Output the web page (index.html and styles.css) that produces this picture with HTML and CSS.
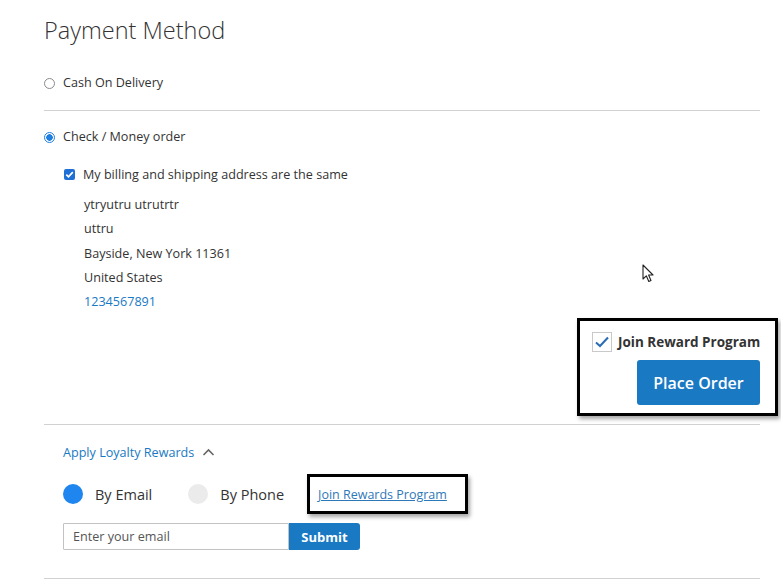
FILE: index.html
```html
<!DOCTYPE html>
<html>
<head>
<meta charset="utf-8">
<link rel="stylesheet" href="styles.css">
</head>
<body>
<div class="page">
  <h1 class="title">Payment Method</h1>

  <div class="method">
    <span class="radio"></span>
    <span class="method-label">Cash On Delivery</span>
  </div>
  <div class="sep sep-first"></div>

  <div class="method method-checked">
    <span class="radio radio-on"></span>
    <span class="method-label">Check / Money order</span>
  </div>

  <div class="details">
    <div class="billing">
      <span class="cbox">
        <svg width="11" height="11" viewBox="0 0 11 11"><path d="M2.3 5.6 L4.5 7.8 L8.8 3.2" fill="none" stroke="#fff" stroke-width="1.7"/></svg>
      </span>
      <span class="billing-label">My billing and shipping address are the same</span>
    </div>
    <div class="addr">
      <div>ytryutru utrutrtr</div>
      <div>uttru</div>
      <div>Bayside, New York 11361</div>
      <div>United States</div>
      <div class="phone">1234567891</div>
    </div>
    <div class="actions">
      <div class="reward-box">
        <div class="reward-check">
          <span class="rbox">
            <svg width="16" height="14" viewBox="0 0 16 14"><path d="M2 7.5 L6 11 L14 2.5" fill="none" stroke="#2a6db5" stroke-width="2"/></svg>
          </span>
          <span class="reward-label">Join Reward Program</span>
        </div>
        <button class="place">Place Order</button>
      </div>
    </div>
  </div>
  <div class="sep sep-mid"></div>

  <div class="loyalty">
    <div class="loyalty-head">
      <span class="loyalty-title">Apply Loyalty Rewards</span>
      <svg class="chev" width="13" height="8" viewBox="0 0 13 8"><path d="M1.5 7 L6.5 2 L11.5 7" fill="none" stroke="#666" stroke-width="1.6"/></svg>
    </div>
    <div class="opt-row">
      <span class="dot dot-on"></span>
      <span class="opt-label">By Email</span>
      <span class="dot dot-off"></span>
      <span class="opt-label">By Phone</span>
      <div class="join-box"><a class="join-link" href="#">Join Rewards Program</a></div>
    </div>
    <div class="email-row">
      <input class="email" type="text" placeholder="Enter your email">
      <button class="submit">Submit</button>
    </div>
  </div>
  <div class="sep sep-last"></div>

  <svg class="cursor" width="12" height="19" viewBox="0 0 12 19"><path d="M1 1 L1 15 L4.3 11.8 L6.8 17.5 L9 16.5 L6.6 11 L11 11 Z" fill="#fff" stroke="#222" stroke-width="1.1" stroke-linejoin="round"/></svg>
</div>
</body>
</html>
```

FILE: styles.css
```css
* { box-sizing: border-box; }
html, body { margin: 0; padding: 0; background: #fff; }
body {
  font-family: "Open Sans", "Liberation Sans", sans-serif;
  color: #333;
  font-size: 12.6px;
}
.page {
  position: relative;
  width: 781px;
  height: 584px;
  padding: 15px 21px 0 44px;
  overflow: hidden;
}
.title {
  margin: 0;
  font-size: 23.5px;
  font-weight: 300;
  line-height: 30px;
  color: #333;
}
.method {
  display: flex;
  align-items: center;
  height: 20px;
  margin-top: 28px;
}
.method-checked { margin-top: 16px; }
.radio {
  width: 11px;
  height: 11px;
  border-radius: 50%;
  border: 1px solid #8a8a8a;
  background: #fff;
  margin-right: 8px;
  flex: none;
}
.radio-on {
  border: 1px solid #1f7fe0;
  background: radial-gradient(circle, #1f7fe0 0 3px, #fff 3.5px);
}
.method-label { line-height: 20px; }
.sep { height: 1px; background: #d1d1d1; width: 716px; }
.sep-first { margin-top: 17px; }
.sep-mid { margin-top: 8px; }
.sep-last { margin-top: 28px; }

.details { padding-left: 20px; }
.billing {
  display: flex;
  align-items: center;
  height: 20px;
  margin-top: 17px;
}
.cbox {
  width: 11px;
  height: 11px;
  border-radius: 2px;
  background: #1f6fd6;
  margin-right: 8px;
  display: flex;
  flex: none;
}
.addr {
  margin-top: 9px;
  line-height: 24.25px;
  padding-left: 20px;
}
.phone { color: #1979c3; }
.actions {
  display: flex;
  justify-content: flex-end;
  margin-top: 4px;
  margin-right: -18px;
}
.reward-box {
  border: 3px solid #000;
  box-shadow: 2px 3px 4px rgba(0,0,0,0.35);
  padding: 11px 15px 8px 12px;
  display: flex;
  flex-direction: column;
  align-items: flex-end;
  width: 201px;
}
.reward-check {
  display: flex;
  align-items: center;
  align-self: stretch;
  height: 20px;
}
.rbox {
  width: 20px;
  height: 20px;
  border: 1px solid #c9c9c9;
  background: #fff;
  display: flex;
  align-items: center;
  justify-content: center;
  margin-right: 6px;
  flex: none;
}
.reward-label {
  font-weight: 700;
  font-size: 13.5px;
  color: #333;
  white-space: nowrap;
}
.place {
  margin-top: 8px;
  width: 123px;
  height: 45px;
  border: none;
  border-radius: 3px;
  background: #1979c3;
  color: #fff;
  font-family: "Open Sans", "Liberation Sans", sans-serif;
  font-size: 16px;
  font-weight: 600;
  padding: 0;
}

.loyalty { padding-left: 19px; }
.loyalty-head {
  display: flex;
  align-items: center;
  height: 20px;
  margin-top: 17px;
}
.loyalty-title { color: #1979c3; }
.chev { margin-left: 8px; }
.opt-row {
  display: flex;
  align-items: center;
  height: 40px;
  margin-top: 12px;
}
.dot {
  width: 20px;
  height: 20px;
  border-radius: 50%;
  flex: none;
}
.dot-on { background: #1e86ee; }
.dot-off { background: #ebebeb; margin-left: 36px; }
.opt-label {
  font-size: 14.5px;
  margin-left: 12px;
  color: #333;
}
.join-box {
  margin-left: 23px;
  width: 161px;
  height: 40px;
  border: 3px solid #000;
  box-shadow: 2px 3px 4px rgba(0,0,0,0.35);
  padding: 0 0 0 8px;
  display: flex;
  align-items: center;
}
.join-link {
  color: #2f78b8;
  font-size: 12.5px;
  text-decoration: underline;
}
.email-row {
  display: flex;
  margin-top: 9px;
}
.email {
  width: 226px;
  height: 27px;
  border: 1px solid #c2c2c2;
  padding: 0 9px;
  font-family: "Open Sans", "Liberation Sans", sans-serif;
  font-size: 12.6px;
  color: #333;
  border-radius: 1px 0 0 1px;
}
.email::placeholder { color: #555; }
.submit {
  width: 71px;
  height: 27px;
  border: none;
  border-radius: 0 3px 3px 0;
  background: #1979c3;
  color: #fff;
  font-family: "Open Sans", "Liberation Sans", sans-serif;
  font-size: 13px;
  font-weight: 700;
  padding: 0;
}
.cursor {
  position: absolute;
  left: 642px;
  top: 264px;
}
```
